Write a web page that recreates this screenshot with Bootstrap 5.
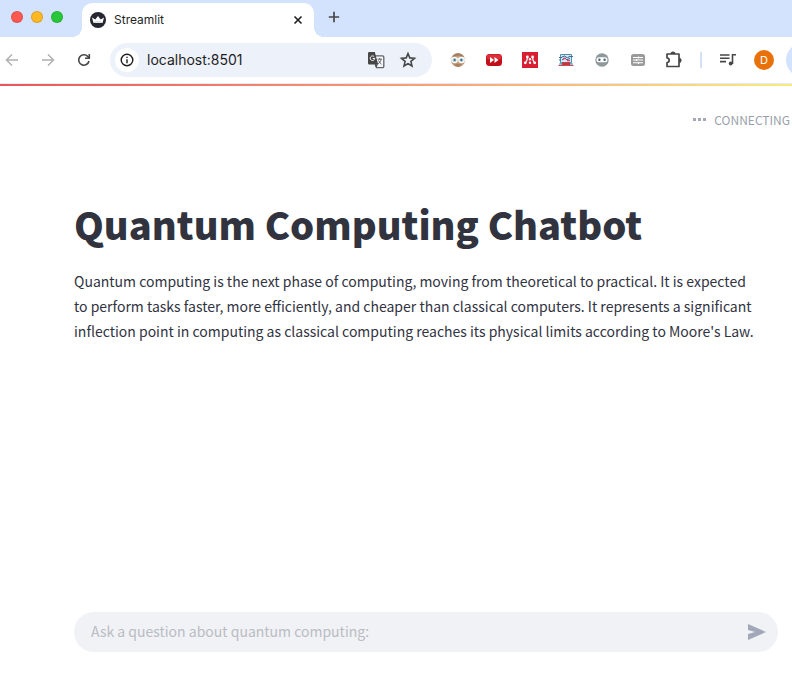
<!DOCTYPE html>
<html lang="en">
<head>
<meta charset="utf-8">
<meta name="viewport" content="width=device-width, initial-scale=1">
<title>Streamlit</title>
<link href="https://cdn.jsdelivr.net/npm/bootstrap@5.3.0/dist/css/bootstrap.min.css" rel="stylesheet">
<style>
  body { font-family: "Noto Sans CJK SC", "Noto Sans", sans-serif; color: #31333f; overflow-x: hidden; }
  svg { display: block; flex-shrink: 0; }
  .chrome-ui { font-family: Inter, Roboto, sans-serif; color: #1f1f1f; }
  .tab-strip { background: #d3e3fd; height: 37px; padding: 3px 0 0 11px; }
  .strip-part { padding-bottom: 6px; }
  .light { width: 12px; height: 12px; border-radius: 50%; border: 1px solid rgba(0,0,0,.12); }
  .light-red { background: #fe5850; }
  .light-amber { background: #fdb824; }
  .light-green { background: #28c73a; }
  .site-tab { width: 232px; height: 34px; margin-left: 19px; padding: 0 4px 0 8px; border-radius: 10px 10px 0 0; background: #fff; font-size: 12px; }
  .site-tab::before, .site-tab::after { content: ""; position: absolute; bottom: 0; width: 10px; height: 10px; }
  .site-tab::before { left: -10px; background: radial-gradient(circle at 0 0, transparent 10px, #fff 10px); }
  .site-tab::after { right: -10px; background: radial-gradient(circle at 100% 0, transparent 10px, #fff 10px); }
  .icon-btn { width: 24px; height: 24px; flex-shrink: 0; padding: 0; border: 0; background: none; display: flex; align-items: center; justify-content: center; color: #474747; }
  .icon-btn:disabled { color: #b0b0b0; }
  .toolbar { height: 47px; gap: 12px; border-bottom: 1px solid #e3e9f6; }
  .omnibox { min-width: 0; height: 34px; margin: 0 2px; padding: 0 12px 0 5px; border-radius: 17px; background: #ecf1fa; }
  .info-btn { border-radius: 50%; background: #fff; }
  .address { width: 0; min-width: 0; margin-left: 8px; padding: 0; border: 0; background: none; font-size: 14px; line-height: 20px; color: #1f1f1f; outline: 0; }
  .divider { width: 2px; height: 16px; margin: 0 2px; background: #d3e0f7; flex-shrink: 0; }
  .avatar { width: 20px; height: 20px; border-radius: 50%; background: #e8710a; color: #fff; font-size: 11px; line-height: 20px; }
  .update-pill { width: 6px; height: 34px; margin-left: -2px; flex-shrink: 0; overflow: hidden; }
  .update-pill span { display: block; width: 60px; height: 34px; border-radius: 17px; background: #d3e3fd; }
  .decoration { height: 2px; background: linear-gradient(90deg, #e9565a, #f69b78 50%, #f9ec7e); }
  .status { padding: 24px 2px 0; gap: 8px; font-size: 12px; line-height: 20px; color: #9a9fac; }
  .app-main { padding: 67px 14px 0 74px; }
  .app-title { margin: 0; font-size: 38px; line-height: 54px; font-weight: 900; }
  .app-intro { max-width: 686px; margin: 18px 0 0; font-size: 14px; line-height: 25px; }
  .app-foot { padding: 0 14px 42px 74px; }
  .chat-box { height: 40px; border-radius: 20px; padding: 0 9px 0 17px; background: #f0f2f6; }
  .chat-input { min-width: 0; padding: 0 0 2px; border: 0; outline: 0; background: none; font-size: 14px; line-height: 24px; }
  .chat-input::placeholder { color: #babcc2; opacity: 1; }
</style>
<script src="https://cdn.jsdelivr.net/npm/bootstrap@5.3.0/dist/js/bootstrap.bundle.min.js"></script>
</head>
<body class="d-flex flex-column min-vh-100 bg-white">
<header class="chrome-ui">
  <div class="tab-strip d-flex">
    <div class="strip-part d-flex align-items-center gap-2">
      <span class="light light-red"></span><span class="light light-amber"></span><span class="light light-green"></span>
    </div>
    <div class="site-tab strip-part position-relative d-flex align-items-center">
      <svg width="16" height="16" viewBox="0 0 16 16"><circle cx="8" cy="8" r="8" fill="#262730"/><path d="M2 5.500 5.300 7.500 8 4l2.700 3.500L14 5.500 12.500 11h-9z" fill="#fff"/><path d="M4 10.300q4-1 8 0" stroke="#aaa" stroke-width=".7" fill="none"/></svg>
      <span class="ms-2 flex-grow-1">Streamlit</span>
      <button class="icon-btn" aria-label="Close tab"><svg width="16" height="16" viewBox="0 0 16 16" fill="none" stroke="#1f1f1f" stroke-width="1.600"><path d="m4.500 4.500 7 7m0-7-7 7"/></svg></button>
    </div>
    <div class="strip-part d-flex align-items-center ms-2">
      <button class="icon-btn" aria-label="New tab"><svg width="16" height="16" viewBox="0 0 16 16" fill="none" stroke="#474747" stroke-width="1.700"><path d="M8 2.800v10.400M2.800 8h10.400"/></svg></button>
    </div>
  </div>
  <div class="toolbar d-flex align-items-center">
    <button class="icon-btn" disabled aria-label="Back"><svg width="16" height="16" viewBox="0 0 16 16" fill="none" stroke="currentColor" stroke-width="1.500"><path d="M14 8H3m5-5.500L2.500 8 8 13.500"/></svg></button>
    <button class="icon-btn" disabled aria-label="Forward"><svg width="16" height="16" viewBox="0 0 16 16" fill="none" stroke="currentColor" stroke-width="1.500"><path d="M2 8h11M8 2.500 13.500 8 8 13.500"/></svg></button>
    <button class="icon-btn" aria-label="Reload"><svg width="16" height="16" viewBox="0 0 16 16" fill="none" stroke="currentColor" stroke-width="1.600"><path d="M13 9a5.200 5.200 0 1 1-1.300-4.600l1.300 1.300"/><path d="M13.300 2v4.300H9"/></svg></button>
    <form class="omnibox flex-grow-1 d-flex align-items-center" onsubmit="return false">
      <button type="button" class="icon-btn info-btn" aria-label="Site information"><svg width="14" height="14" viewBox="0 0 14 14" fill="none" stroke="#1f1f1f" stroke-width="1.400"><circle cx="7" cy="7" r="5.800"/><path d="M7 6.300v4M7 3.700v1.400"/></svg></button>
      <input class="address flex-grow-1" type="text" value="localhost:8501" aria-label="Address">
      <button type="button" class="icon-btn me-2" aria-label="Translate"><svg width="18" height="18" viewBox="0 0 18 18"><path d="M7 4.800h8.500a1.300 1.300 0 0 1 1.300 1.300v9.300a1.300 1.300 0 0 1-1.300 1.300H9.500z" fill="#f5f7fb" stroke="#5f6368" stroke-width="1.300"/><path d="M10.500 8.200H15M12.700 7v1.200M14.200 8.300c-.5 2-1.900 3.600-3.300 4.700M11.500 9.500c.7 1.600 1.900 2.800 3 3.700" fill="none" stroke="#5f6368"/><path d="M2.300 1h5.500l3.400 12.500H2.300A1.300 1.300 0 0 1 1 12.200V2.300A1.300 1.300 0 0 1 2.300 1z" fill="#474747"/><path d="M7.300 5.800a2.300 2.300 0 1 0 .5 1.700H5.700" fill="none" stroke="#fff"/><path d="M7.500 13.500h3.500l-2 3z" fill="#474747"/></svg></button>
      <button type="button" class="icon-btn" aria-label="Bookmark this page"><svg width="18" height="18" viewBox="0 0 18 18" fill="none" stroke="#474747" stroke-width="1.600"><path d="m9 2.500 1.800 4.400 4.700.4-3.600 3.100 1.100 4.600L9 12.600 5 15l1.100-4.600-3.600-3.100 4.700-.4z"/></svg></button>
    </form>
    <button class="icon-btn" aria-label="Reader extension"><svg width="16" height="16" viewBox="0 0 16 16"><circle cx="8" cy="8" r="7" fill="#c49a77"/><path d="M2 5a7 7 0 0 1 12 0Q8 2 2 5z" fill="#9d7d64"/><path d="M4 13q4-2.500 8 0-4 3.500-8 0z" fill="#a87f60"/><path d="M0 6.500h16" stroke="#dfe9ed" stroke-width="1.500"/><circle cx="4.500" cy="8" r="2.700" fill="#a8ccd5" stroke="#fff" stroke-width="1.200"/><circle cx="11.500" cy="8" r="2.700" fill="#a8ccd5" stroke="#fff" stroke-width="1.200"/><circle cx="4.700" cy="8" r="1" fill="#386674"/><circle cx="11.300" cy="8" r="1" fill="#386674"/></svg></button>
    <button class="icon-btn" aria-label="Video speed extension"><svg width="16" height="16" viewBox="0 0 16 16"><rect y="2" width="16" height="12" rx="3.500" fill="#c0101a"/><rect x=".5" y="2.500" width="15" height="5" rx="2.500" fill="#db3037"/><path d="m4 5 4 3-4 3zm4.500 0 4 3-4 3z" fill="#fff"/></svg></button>
    <button class="icon-btn" aria-label="Reference manager"><svg width="16" height="16" viewBox="0 0 16 16"><path d="M0 0h16v16H0z" fill="#d81f32"/><g fill="#fff"><circle cx="5.400" cy="5" r="1.400"/><circle cx="10.600" cy="5" r="1.400"/><circle cx="8" cy="7.300" r="1.200"/><circle cx="3.300" cy="10.800" r="1.400"/><circle cx="8" cy="10.800" r="1.200"/><circle cx="12.700" cy="10.800" r="1.400"/></g><path d="M3.700 10q1.500-1 1.600-4M12.300 10q-1.500-1-1.600-4" fill="none" stroke="#fff" stroke-width="1.200"/></svg></button>
    <button class="icon-btn" aria-label="Laptop extension"><svg width="16" height="16" viewBox="0 0 16 16"><path d="M2.500 2.500h11v8h-11z" fill="#d4ebf3" stroke="#4b8fa9"/><path d="M1 5.500h3m8-1h3M1 8h2" stroke="#3c7194"/><path d="M4 5q3-2 4 0t4-1M4 8l3-2 2 2 3-2" fill="none" stroke="#3d5790"/><path d="M5 6.500h3m1 2h3" stroke="#e04461" stroke-width="1.300"/><path d="M2 10.300h3v2.500H1zm9 0h3l1 2.500h-4z" fill="#6ba7bd"/><path d="M4 10.300h8v3H4z" fill="#c83440"/><path d="M.5 13.500h15" stroke="#ce4b56"/></svg></button>
    <button class="icon-btn" aria-label="Privacy extension"><svg width="16" height="16" viewBox="0 0 16 16"><circle cx="8" cy="8" r="6.700" fill="#8d999c"/><rect x="2.500" y="5.300" width="11" height="5" rx="2.500" fill="#fff"/><circle cx="5.400" cy="7.700" r="1.200" fill="#526267"/><circle cx="10.600" cy="7.700" r="1.200" fill="#526267"/></svg></button>
    <button class="icon-btn" aria-label="Notes extension"><svg width="16" height="16" viewBox="0 0 16 16"><rect x="1" y="2" width="14" height="12" rx="2.500" fill="#9a9a9a"/><path d="M3 5.500h5m1 0h4M3 8h3m1 0h6M3 10.700h5m1 0h4M8.500 4.500v2m-2 .500v2m2 1v2" stroke="#fff" stroke-width="1.100"/></svg></button>
    <button class="icon-btn" aria-label="Extensions"><svg width="20" height="20" viewBox="0 0 20 20" fill="none" stroke="#474747" stroke-width="1.700" stroke-linejoin="round"><path d="M3 4h12v12.500H3v-4q2.200 0 2.200-2.200T3 8z"/><path d="M7.300 4a1.700 1.700 0 0 1 3.400 0M15 8.500a1.700 1.700 0 0 1 0 3.400" fill="#474747"/></svg></button>
    <span class="divider"></span>
    <button class="icon-btn" aria-label="Media controls"><svg width="16" height="16" viewBox="0 0 16 16" fill="none" stroke="#474747" stroke-width="1.600"><path d="M0 3h9.500M0 6.300h9.500M0 9.600h6M12.500 12V2.800H16"/><circle cx="10.700" cy="11.500" r="1.900" fill="#474747" stroke="none"/></svg></button>
    <button class="icon-btn" aria-label="Profile D"><span class="avatar">D</span></button>
    <div class="update-pill"><span></span></div>
  </div>
</header>
<div class="decoration"></div>
<div class="status d-flex align-items-center justify-content-end" role="status">
  <svg width="13" height="4" viewBox="0 0 13 4" fill="#a3a8b4"><path d="M0 0h3v3H0zm5 0h3v3H5zm5 0h3v3h-3z"/></svg>
  <span>CONNECTING</span>
</div>
<main class="app-main flex-grow-1">
  <h1 class="app-title">Quantum Computing Chatbot</h1>
  <p class="app-intro">Quantum computing is the next phase of computing, moving from theoretical to practical. It is expected to perform tasks faster, more efficiently, and cheaper than classical computers. It represents a significant inflection point in computing as classical computing reaches its physical limits according to Moore's Law.</p>
</main>
<footer class="app-foot">
  <form class="chat-box d-flex align-items-center" onsubmit="return false">
    <input class="chat-input flex-grow-1" type="text" placeholder="Ask a question about quantum computing:" aria-label="Ask a question about quantum computing">
    <button class="icon-btn" aria-label="Send"><svg width="20" height="16" viewBox="0 0 20 16"><path d="M1 0l18 8L1 16v-6l7-2-7-2z" fill="#a3a8b8"/></svg></button>
  </form>
</footer>
</body>
</html>
